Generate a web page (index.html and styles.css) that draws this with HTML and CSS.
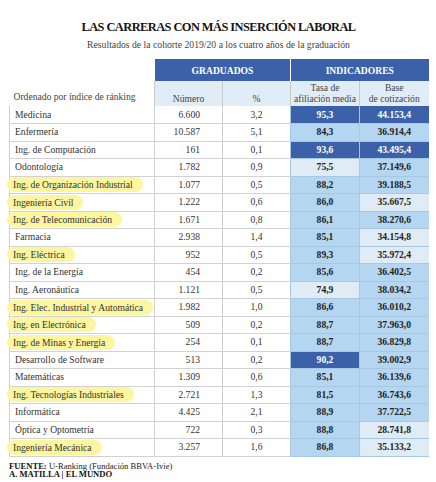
FILE: index.html
```html
<!DOCTYPE html>
<html lang="es">
<head>
  <meta charset="UTF-8" />
  <title>Las carreras con más inserción laboral</title>
  <link rel="stylesheet" href="styles.css">
</head>
<body>
  <div class="graphic">
    <h1 class="title">LAS CARRERAS CON MÁS INSERCIÓN LABORAL</h1>
    <p class="subtitle">Resultados de la cohorte 2019/20 a los cuatro años de la graduación</p>

    <table class="ranking">
      <colgroup>
        <col class="c-name"><col class="c-num"><col class="c-pct"><col class="c-rate"><col class="c-base">
      </colgroup>
      <thead>
        <tr class="group-row">
          <th class="blank"></th>
          <th class="group" colspan="2">GRADUADOS</th>
          <th class="group" colspan="2">INDICADORES</th>
        </tr>
        <tr class="sub-row">
          <th class="order">Ordenado por índice de ránking</th>
          <th class="sub">Número</th>
          <th class="sub">%</th>
          <th class="sub">Tasa de<br>afiliación media</th>
          <th class="sub">Base<br>de cotización</th>
        </tr>
      </thead>
      <tbody>
        <tr><td class="name">Medicina</td><td class="num">6.600</td><td class="pct">3,2</td><td class="ind dark">95,3</td><td class="ind dark">44.153,4</td></tr>
        <tr><td class="name">Enfermería</td><td class="num">10.587</td><td class="pct">5,1</td><td class="ind mid">84,3</td><td class="ind mid">36.914,4</td></tr>
        <tr><td class="name">Ing. de Computación</td><td class="num">161</td><td class="pct">0,1</td><td class="ind dark">93,6</td><td class="ind dark">43.495,4</td></tr>
        <tr><td class="name">Odontología</td><td class="num">1.782</td><td class="pct">0,9</td><td class="ind light">75,5</td><td class="ind mid">37.149,6</td></tr>
        <tr><td class="name"><span class="mark">Ing. de Organización Industrial</span></td><td class="num">1.077</td><td class="pct">0,5</td><td class="ind mid">88,2</td><td class="ind mid">39.188,5</td></tr>
        <tr><td class="name"><span class="mark">Ingeniería Civil</span></td><td class="num">1.222</td><td class="pct">0,6</td><td class="ind mid">86,0</td><td class="ind light">35.667,5</td></tr>
        <tr><td class="name"><span class="mark">Ing. de Telecomunicación</span></td><td class="num">1.671</td><td class="pct">0,8</td><td class="ind mid">86,1</td><td class="ind mid">38.270,6</td></tr>
        <tr><td class="name">Farmacia</td><td class="num">2.938</td><td class="pct">1,4</td><td class="ind mid">85,1</td><td class="ind light">34.154,8</td></tr>
        <tr><td class="name"><span class="mark">Ing. Eléctrica</span></td><td class="num">952</td><td class="pct">0,5</td><td class="ind mid">89,3</td><td class="ind light">35.972,4</td></tr>
        <tr><td class="name">Ing. de la Energía</td><td class="num">454</td><td class="pct">0,2</td><td class="ind mid">85,6</td><td class="ind mid">36.402,5</td></tr>
        <tr><td class="name">Ing. Aeronáutica</td><td class="num">1.121</td><td class="pct">0,5</td><td class="ind light">74,9</td><td class="ind mid">38.034,2</td></tr>
        <tr><td class="name"><span class="mark">Ing. Elec. Industrial y Automática</span></td><td class="num">1.982</td><td class="pct">1,0</td><td class="ind mid">86,6</td><td class="ind mid">36.010,2</td></tr>
        <tr><td class="name"><span class="mark">Ing. en Electrónica</span></td><td class="num">509</td><td class="pct">0,2</td><td class="ind mid">88,7</td><td class="ind mid">37.963,0</td></tr>
        <tr><td class="name"><span class="mark">Ing. de Minas y Energía</span></td><td class="num">254</td><td class="pct">0,1</td><td class="ind mid">88,7</td><td class="ind mid">36.829,8</td></tr>
        <tr><td class="name">Desarrollo de Software</td><td class="num">513</td><td class="pct">0,2</td><td class="ind dark">90,2</td><td class="ind mid">39.002,9</td></tr>
        <tr><td class="name">Matemáticas</td><td class="num">1.309</td><td class="pct">0,6</td><td class="ind mid">85,1</td><td class="ind mid">36.139,6</td></tr>
        <tr><td class="name"><span class="mark">Ing. Tecnologías Industriales</span></td><td class="num">2.721</td><td class="pct">1,3</td><td class="ind mid">81,5</td><td class="ind mid">36.743,6</td></tr>
        <tr><td class="name">Informática</td><td class="num">4.425</td><td class="pct">2,1</td><td class="ind mid">88,9</td><td class="ind mid">37.722,5</td></tr>
        <tr><td class="name">Óptica y Optometría</td><td class="num">722</td><td class="pct">0,3</td><td class="ind mid">88,8</td><td class="ind light">28.741,8</td></tr>
        <tr><td class="name"><span class="mark">Ingeniería Mecánica</span></td><td class="num">3.257</td><td class="pct">1,6</td><td class="ind mid">86,8</td><td class="ind light">35.133,2</td></tr>
      </tbody>
    </table>

    <div class="credits">
      <p><b>FUENTE:</b> U-Ranking (Fundación BBVA-Ivie)</p>
      <p><b>A. MATILLA | EL MUNDO</b></p>
    </div>
  </div>
</body>
</html>
```

FILE: styles.css
```css
* { box-sizing: border-box; margin: 0; padding: 0; }
body { background: #fff; font-family: "Liberation Serif", "DejaVu Serif", serif; color: #333; }

/* ===== Header ===== */
.graphic { width: 436px; padding: 19px 8px 0 9px; }
.title { text-align: center; font-size: 12.4px; font-weight: bold; color: #151515; letter-spacing: -0.55px; line-height: 17px; }
.subtitle { text-align: center; font-size: 9.7px; color: #444; line-height: 13px; margin-top: 2px; margin-bottom: 8px; }

/* ===== Table ===== */
.ranking { border-collapse: collapse; table-layout: fixed; width: 419px; font-size: 9.6px; }
.c-name { width: 145px; }
.c-num, .c-pct { width: 68px; }
.c-rate, .c-base { width: 69px; }

.group-row th { height: 22px; }
.group { background: #3b62a8; color: #fff; font-weight: bold; font-size: 9.6px; border-left: 1px solid #fff; }
.group-row .blank { background: #fff; }

.sub-row th { height: 25px; vertical-align: bottom; font-weight: normal; color: #444; line-height: 11px; padding-bottom: 2px; }
.sub { background: #e1edf6; border-left: 1px solid #c9c9c9; }
.sub-row .order { text-align: left; padding-left: 4px; padding-bottom: 4px; }

td { height: 17.5px; border-bottom: 1px solid #d2d2d2; line-height: 12px; white-space: nowrap; }
.name { border-left: 1px solid #cfcfcf; border-right: 1px solid #cfcfcf; padding-left: 5px; overflow: visible; }
.num { text-align: right; padding-right: 22px; border-right: 1px solid #cfcfcf; }
.pct { text-align: center; }
.ind { text-align: center; font-weight: bold; color: #222; border-left: 1px solid #a7c7e2; border-bottom-color: #a7c7e2; }
.ind.dark { background: #3b62a8; color: #fff; }
.ind.mid { background: #b5d6f0; }
.ind.light { background: #dfecf6; }

/* highlighted careers */
.mark { display: inline-block; background: #fbf69f; border-radius: 8px; padding: 1px 10px 1px 6px; margin-left: -8px; line-height: 13px; }

/* ===== Credits ===== */
.credits { margin-top: 5px; font-size: 8.6px; line-height: 8.5px; color: #222; }
.credits b { color: #111; }
```
